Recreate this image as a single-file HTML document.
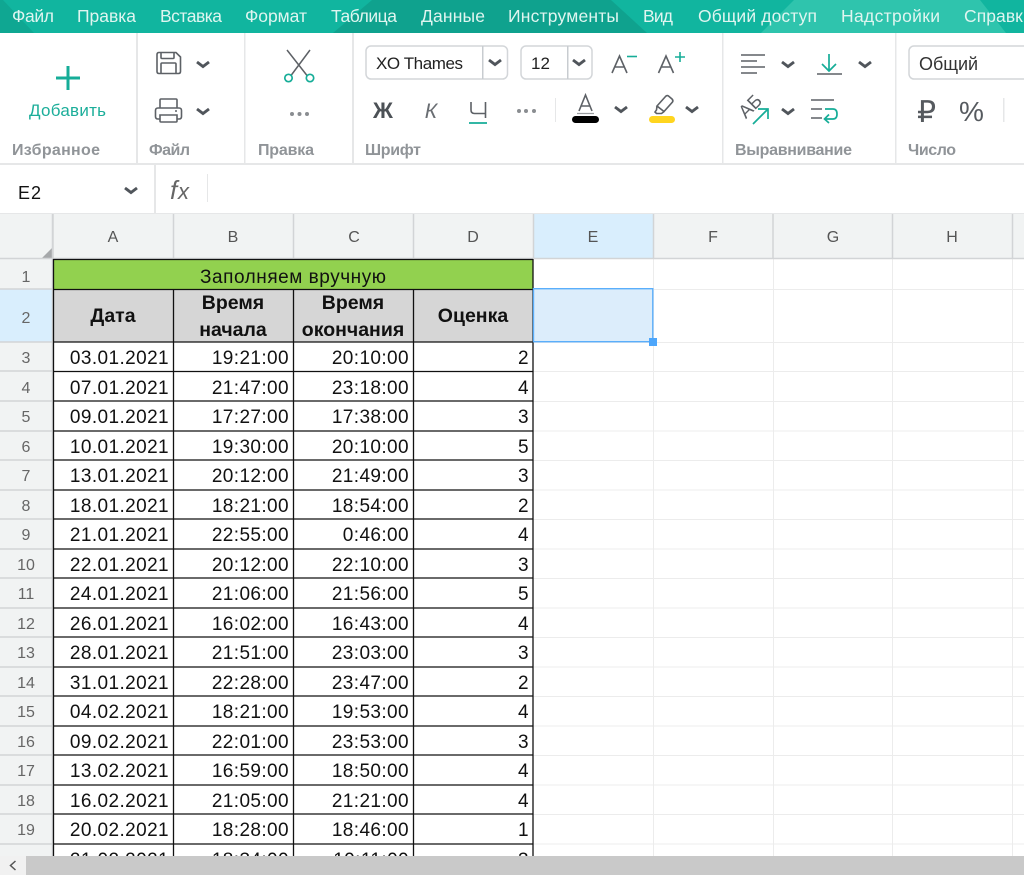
<!DOCTYPE html>
<html lang="ru"><head><meta charset="utf-8"><title>Таблица</title>
<style>
html,body{margin:0;padding:0;background:#fff;width:1024px;height:875px;overflow:hidden}
svg{display:block;font-family:"Liberation Sans",sans-serif}
.m{fill:#dff5f0;font-size:17.5px}
.g{fill:#909498;font-size:16px;font-weight:bold}
.h{fill:#555;font-size:16px;text-anchor:middle}
.r{fill:#666;font-size:16px;text-anchor:middle}
.t{fill:#111;font-size:19px;letter-spacing:.4px;text-anchor:end}
.b{fill:#111;font-size:19.5px;font-weight:bold;text-anchor:middle}
.ic{fill:none;stroke:#5d6166;stroke-width:1.6}
.tl{fill:none;stroke:#16ad98;stroke-width:1.7}
.ch{fill:none;stroke:#50555b;stroke-width:2.9}
</style></head><body>
<svg width="1024" height="875" viewBox="0 0 1024 875" xmlns="http://www.w3.org/2000/svg">
<!-- menu -->
<rect width="1024" height="33" fill="#11b59f"/>
<polygon points="0,0 3,0 34,33 0,33" fill="#0fa792"/>
<polygon points="372,0 611,0 647,33 333,33" fill="#0fa28e"/>
<polygon points="794,0 980,0 1006,33 761,33" fill="#2fc4ad"/>
<g class="m">
<text x="12" y="22" textLength="42">Файл</text>
<text x="77" y="22" textLength="59">Правка</text>
<text x="160" y="22" textLength="62">Вставка</text>
<text x="245" y="22" textLength="62">Формат</text>
<text x="331" y="22" textLength="66">Таблица</text>
<text x="421" y="22" textLength="64">Данные</text>
<text x="508" y="22" textLength="111">Инструменты</text>
<text x="643" y="22" textLength="30">Вид</text>
<text x="698" y="22" textLength="119">Общий доступ</text>
<text x="841" y="22" textLength="99">Надстройки</text>
<text x="964" y="22" textLength="69">Справка</text>
</g>
<!-- ribbon separators -->
<g fill="#e6e7e8">
<rect x="136" y="33" width="2" height="130"/><rect x="244" y="33" width="1.5" height="130"/><rect x="352" y="33" width="2" height="130"/><rect x="722" y="33" width="1.5" height="130"/><rect x="895" y="33" width="1.5" height="130"/>
<rect y="163" width="1024" height="2"/><rect y="213" width="1024" height="1.5"/><rect x="154" y="165" width="2" height="48"/><rect x="207" y="174" width="1" height="28"/>
<rect x="555" y="98" width="1" height="24"/><rect x="1003" y="98" width="1.5" height="24"/>
</g>
<!-- group labels -->
<g class="g">
<text x="12" y="155" textLength="88">Избранное</text>
<text x="149" y="155" textLength="41">Файл</text>
<text x="258" y="155" textLength="56">Правка</text>
<text x="365" y="155" textLength="56">Шрифт</text>
<text x="735" y="155" textLength="117">Выравнивание</text>
<text x="908" y="155" textLength="48">Число</text>
</g>
<!-- add -->
<path d="M68 66V90M56 78H80" stroke="#16ad98" stroke-width="3" fill="none"/>
<text x="29" y="116" textLength="77" fill="#1cae9a" font-size="17">Добавить</text>
<!-- save -->
<path class="ic" d="M159 52.5h17l4.500 4.500v14.500q0 2-2 2h-19.500q-2 0-2-2v-17q0-2 2-2zM161 52.500v5q0 1 1 1h11q1 0 1-1v-5M161 74v-10q0-1 1-1h13q1 0 1 1v10"/>
<path class="ch" d="M197 62l6 4.500 6-4.500"/>
<!-- print -->
<path class="ic" d="M160 108v-8q0-1 1-1h15q1 0 1 1v8M160 119h-2q-2.500 0-2.500-2.500v-6q0-2.500 2.500-2.500h21q2.500 0 2.500 2.500v6q0 2.500-2.500 2.500h-2M160 115h17v6q0 1-1 1h-15q-1 0-1-1z"/>
<circle cx="176" cy="111" r="1" fill="#5d6166"/>
<path class="ch" d="M197 109l6 4.500 6-4.500"/>
<!-- scissors -->
<path d="M287 50l20 25.500M310 50l-19 25.500" stroke="#5d6166" stroke-width="1.500" fill="none"/>
<circle cx="288.500" cy="78" r="3.700" class="tl"/><circle cx="310" cy="78" r="3.700" class="tl"/>
<g fill="#8a8d91"><circle cx="292" cy="114" r="2"/><circle cx="299.500" cy="114" r="2"/><circle cx="307" cy="114" r="2"/></g>
<!-- font combo -->
<rect x="366" y="46" width="141.500" height="33" rx="5" fill="#fff" stroke="#d3d6d9" stroke-width="1.500"/>
<rect x="482" y="46" width="1.500" height="33" fill="#c8ccd0"/>
<text x="376" y="69" textLength="87" font-size="17" fill="#222">XO Thames</text>
<path class="ch" d="M489 60l6 4.500 6-4.500"/>
<rect x="521" y="46" width="71" height="33" rx="5" fill="#fff" stroke="#d3d6d9" stroke-width="1.500"/>
<rect x="567" y="46" width="1.500" height="33" fill="#c8ccd0"/>
<text x="531" y="69" textLength="19" font-size="17" fill="#222">12</text>
<path class="ch" d="M573 60l6 4.500 6-4.500"/>
<!-- A- A+ -->
<path class="ic" d="M612 73l7.500-17 7.500 17M615 67h9"/><path d="M627 56.500h10" stroke="#16ad98" stroke-width="1.600"/>
<path class="ic" d="M658.500 73l7.500-17 7.500 17M661.500 67h9"/><path d="M675 57h10M680 52v10" stroke="#16ad98" stroke-width="1.600" fill="none"/>
<!-- bold italic underline -->
<text x="383" y="118" text-anchor="middle" font-size="22" font-weight="bold" fill="#4c5156">Ж</text>
<text x="431" y="118" text-anchor="middle" font-size="21" font-style="italic" fill="#6a6e73">К</text>
<path class="ic" d="M471 102v8q0 3.500 3.500 3.500h11M485.500 102v16"/>
<path d="M469 123h18" stroke="#16ad98" stroke-width="1.700"/>
<g fill="#8a8d91"><circle cx="519" cy="111" r="2"/><circle cx="526" cy="111" r="2"/><circle cx="534" cy="111" r="2"/></g>
<!-- text colour -->
<path class="ic" d="M579 111l6.500-16 6.500 16M581.500 106h8"/><path d="M577 113.500h17" stroke="#9a9da0" stroke-width="1.200"/>
<rect x="572" y="116" width="27" height="7" rx="3.500" fill="#000"/>
<path class="ch" d="M615 107l6 4.500 6-4.500"/>
<!-- fill colour -->
<path class="ic" d="M657 106l8.500-9.500q1.500-1.500 3-.5l3.500 3q1.500 1.500.5 3l-8.500 9.500zM657 106l-.5 4-1.500 2 1.500 1.500h5l2-1.500.5-.5" stroke-width="1.200"/>
<rect x="649" y="116" width="26" height="7" rx="3.500" fill="#ffd51f"/>
<path class="ch" d="M686 107l6 4.500 6-4.500"/>
<!-- align -->
<path class="ic" d="M741 55h24M741 61h16M741 67h24M741 73h16" stroke-width="1.500"/>
<path class="ch" d="M782 62l6 4.500 6-4.500"/>
<path class="tl" d="M829 54v17M822 64l7 7 7-7"/><path d="M817 74h25" stroke="#5d6166" stroke-width="1.500"/>
<path class="ch" d="M859 62l6 4.500 6-4.500"/>
<!-- orientation -->
<text x="750" y="112.500" font-size="18.500" fill="#5d6166" transform="rotate(-45 750 106)" text-anchor="middle">АБ</text>
<path class="tl" d="M753 124l15-15M758 109h10v10"/>
<path class="ch" d="M782 109l6 4.500 6-4.500"/>
<!-- wrap -->
<path class="ic" d="M811 100h23M811 109h11M811 118h11" stroke-width="1.500"/>
<path class="tl" d="M825 109h8q4 0 4 5t-4 5h-8M829 114.500l-4.500 4.500 4.500 4"/>
<!-- number combo -->
<rect x="909" y="46" width="130" height="33" rx="5" fill="#fff" stroke="#d3d6d9" stroke-width="1.500"/>
<text x="919" y="70" textLength="59" font-size="18" fill="#333">Общий</text>
<text x="917" y="122" font-size="30" fill="#565a5f">₽</text>
<text x="959" y="121" font-size="28" fill="#565a5f">%</text>
<!-- formula bar -->
<text x="18" y="199" textLength="23" font-size="18" fill="#111">E2</text>
<path class="ch" d="M125 188l6 4.500 6-4.500"/>
<text x="170" y="199" font-size="26" font-style="italic" fill="#666">f</text>
<text x="178" y="199" font-size="22" font-style="italic" fill="#666">x</text>
<!-- headers -->
<rect y="214" width="1024" height="45" fill="#f1f3f3"/>
<rect y="259" width="53" height="597" fill="#f1f3f3"/>
<rect x="533" y="214" width="120" height="45" fill="#d9eefd"/>
<rect y="289" width="53" height="53" fill="#d9eefd"/>
<polygon points="52,248 52,258 42,258" fill="#a6a8aa"/>
<!-- light grid -->
<path stroke="#ececec" stroke-width="1" fill="none" d="M653.500 259V856M773.500 259V856M892.500 259V856M1012.500 259V856M533 289.500H1024M533 342.500H1024M533 371.500H1024M533 401.500H1024M533 431H1024M533 460.500H1024M533 490H1024M533 519.500H1024M533 549H1024M533 578.500H1024M533 608H1024M533 637.500H1024M533 667H1024M533 696.500H1024M533 726H1024M533 755.500H1024M533 785H1024M533 814.500H1024M533 844H1024"/>
<!-- header borders -->
<path stroke="#d2d4d6" stroke-width="1.500" fill="none" d="M0 258.500H1024M53 214V259M173.500 214V259M293.500 214V259M413.500 214V259M533.500 214V259M653.500 214V259M773 214V259M892.500 214V259M1012.500 214V259M52.500 214V856M0 289H53M0 342H53M0 371H53M0 401H53M0 431H53M0 460H53M0 490H53M0 519H53M0 549H53M0 578H53M0 608H53M0 637H53M0 667H53M0 696H53M0 726H53M0 755H53M0 785H53M0 814H53M0 844H53"/>
<g class="h"><text x="113" y="242">A</text><text x="233" y="242">B</text><text x="354" y="242">C</text><text x="473" y="242">D</text><text x="593" y="242">E</text><text x="713" y="242">F</text><text x="833" y="242">G</text><text x="952" y="242">H</text></g>
<g class="r">
<text x="26" y="282">1</text><text x="26" y="323">2</text><text x="26" y="363">3</text><text x="26" y="393">4</text><text x="26" y="422">5</text><text x="26" y="452">6</text><text x="26" y="481">7</text><text x="26" y="511">8</text><text x="26" y="540">9</text><text x="26" y="570">10</text><text x="26" y="599">11</text><text x="26" y="629">12</text><text x="26" y="658">13</text><text x="26" y="688">14</text><text x="26" y="717">15</text><text x="26" y="747">16</text><text x="26" y="776">17</text><text x="26" y="806">18</text><text x="26" y="835">19</text>
</g>
<!-- merged + header cells -->
<rect x="53" y="259" width="480" height="30" fill="#92d14f"/>
<rect x="53" y="289" width="480" height="53" fill="#d6d6d6"/>
<text x="200" y="283" font-size="19" fill="#111" textLength="186">Заполняем вручную</text>
<g class="b">
<text x="113" y="322">Дата</text>
<text x="233" y="309">Время</text><text x="233" y="336">начала</text>
<text x="353" y="309">Время</text><text x="353" y="336">окончания</text>
<text x="473" y="322">Оценка</text>
</g>
<!-- data -->
<g class="t">
<text x="169" y="364">03.01.2021</text><text x="289" y="364">19:21:00</text><text x="409" y="364">20:10:00</text><text x="529" y="364">2</text>
<text x="169" y="394">07.01.2021</text><text x="289" y="394">21:47:00</text><text x="409" y="394">23:18:00</text><text x="529" y="394">4</text>
<text x="169" y="423">09.01.2021</text><text x="289" y="423">17:27:00</text><text x="409" y="423">17:38:00</text><text x="529" y="423">3</text>
<text x="169" y="453">10.01.2021</text><text x="289" y="453">19:30:00</text><text x="409" y="453">20:10:00</text><text x="529" y="453">5</text>
<text x="169" y="482">13.01.2021</text><text x="289" y="482">20:12:00</text><text x="409" y="482">21:49:00</text><text x="529" y="482">3</text>
<text x="169" y="512">18.01.2021</text><text x="289" y="512">18:21:00</text><text x="409" y="512">18:54:00</text><text x="529" y="512">2</text>
<text x="169" y="541">21.01.2021</text><text x="289" y="541">22:55:00</text><text x="409" y="541">0:46:00</text><text x="529" y="541">4</text>
<text x="169" y="571">22.01.2021</text><text x="289" y="571">20:12:00</text><text x="409" y="571">22:10:00</text><text x="529" y="571">3</text>
<text x="169" y="600">24.01.2021</text><text x="289" y="600">21:06:00</text><text x="409" y="600">21:56:00</text><text x="529" y="600">5</text>
<text x="169" y="630">26.01.2021</text><text x="289" y="630">16:02:00</text><text x="409" y="630">16:43:00</text><text x="529" y="630">4</text>
<text x="169" y="659">28.01.2021</text><text x="289" y="659">21:51:00</text><text x="409" y="659">23:03:00</text><text x="529" y="659">3</text>
<text x="169" y="689">31.01.2021</text><text x="289" y="689">22:28:00</text><text x="409" y="689">23:47:00</text><text x="529" y="689">2</text>
<text x="169" y="718">04.02.2021</text><text x="289" y="718">18:21:00</text><text x="409" y="718">19:53:00</text><text x="529" y="718">4</text>
<text x="169" y="748">09.02.2021</text><text x="289" y="748">22:01:00</text><text x="409" y="748">23:53:00</text><text x="529" y="748">3</text>
<text x="169" y="777">13.02.2021</text><text x="289" y="777">16:59:00</text><text x="409" y="777">18:50:00</text><text x="529" y="777">4</text>
<text x="169" y="807">16.02.2021</text><text x="289" y="807">21:05:00</text><text x="409" y="807">21:21:00</text><text x="529" y="807">4</text>
<text x="169" y="836">20.02.2021</text><text x="289" y="836">18:28:00</text><text x="409" y="836">18:46:00</text><text x="529" y="836">1</text>
<text x="169" y="866">21.02.2021</text><text x="289" y="866">18:34:00</text><text x="409" y="866">19:11:00</text><text x="529" y="866">3</text>
</g>
<!-- black grid -->
<path stroke="#111" stroke-width="1.300" fill="none" d="M53.500 259V856M173.500 289V856M293.500 289V856M413.500 289V856M533 259V856M53 259.500H533M53 289.500H533M53 342H533M53 371.500H533M53 401H533M53 431H533M53 460H533M53 490H533M53 519H533M53 549H533M53 578H533M53 608H533M53 637H533M53 667H533M53 696H533M53 726H533M53 755H533M53 785H533M53 814H533M53 844H533"/>
<!-- selection -->
<rect x="533.500" y="288.700" width="119.300" height="53" fill="#dcedfb" stroke="#5aaefb" stroke-width="1.400"/>
<rect x="649" y="338" width="8" height="8" fill="#4da6fb"/>
<!-- scrollbar -->
<rect y="856" width="1024" height="19" fill="#c9c9c9"/>
<rect y="856" width="26" height="19" fill="#f1f1f1"/>
<path d="M15.500 861l-5 4.500 5 4.500" fill="none" stroke="#555" stroke-width="1.500"/>
</svg>
</body></html>
